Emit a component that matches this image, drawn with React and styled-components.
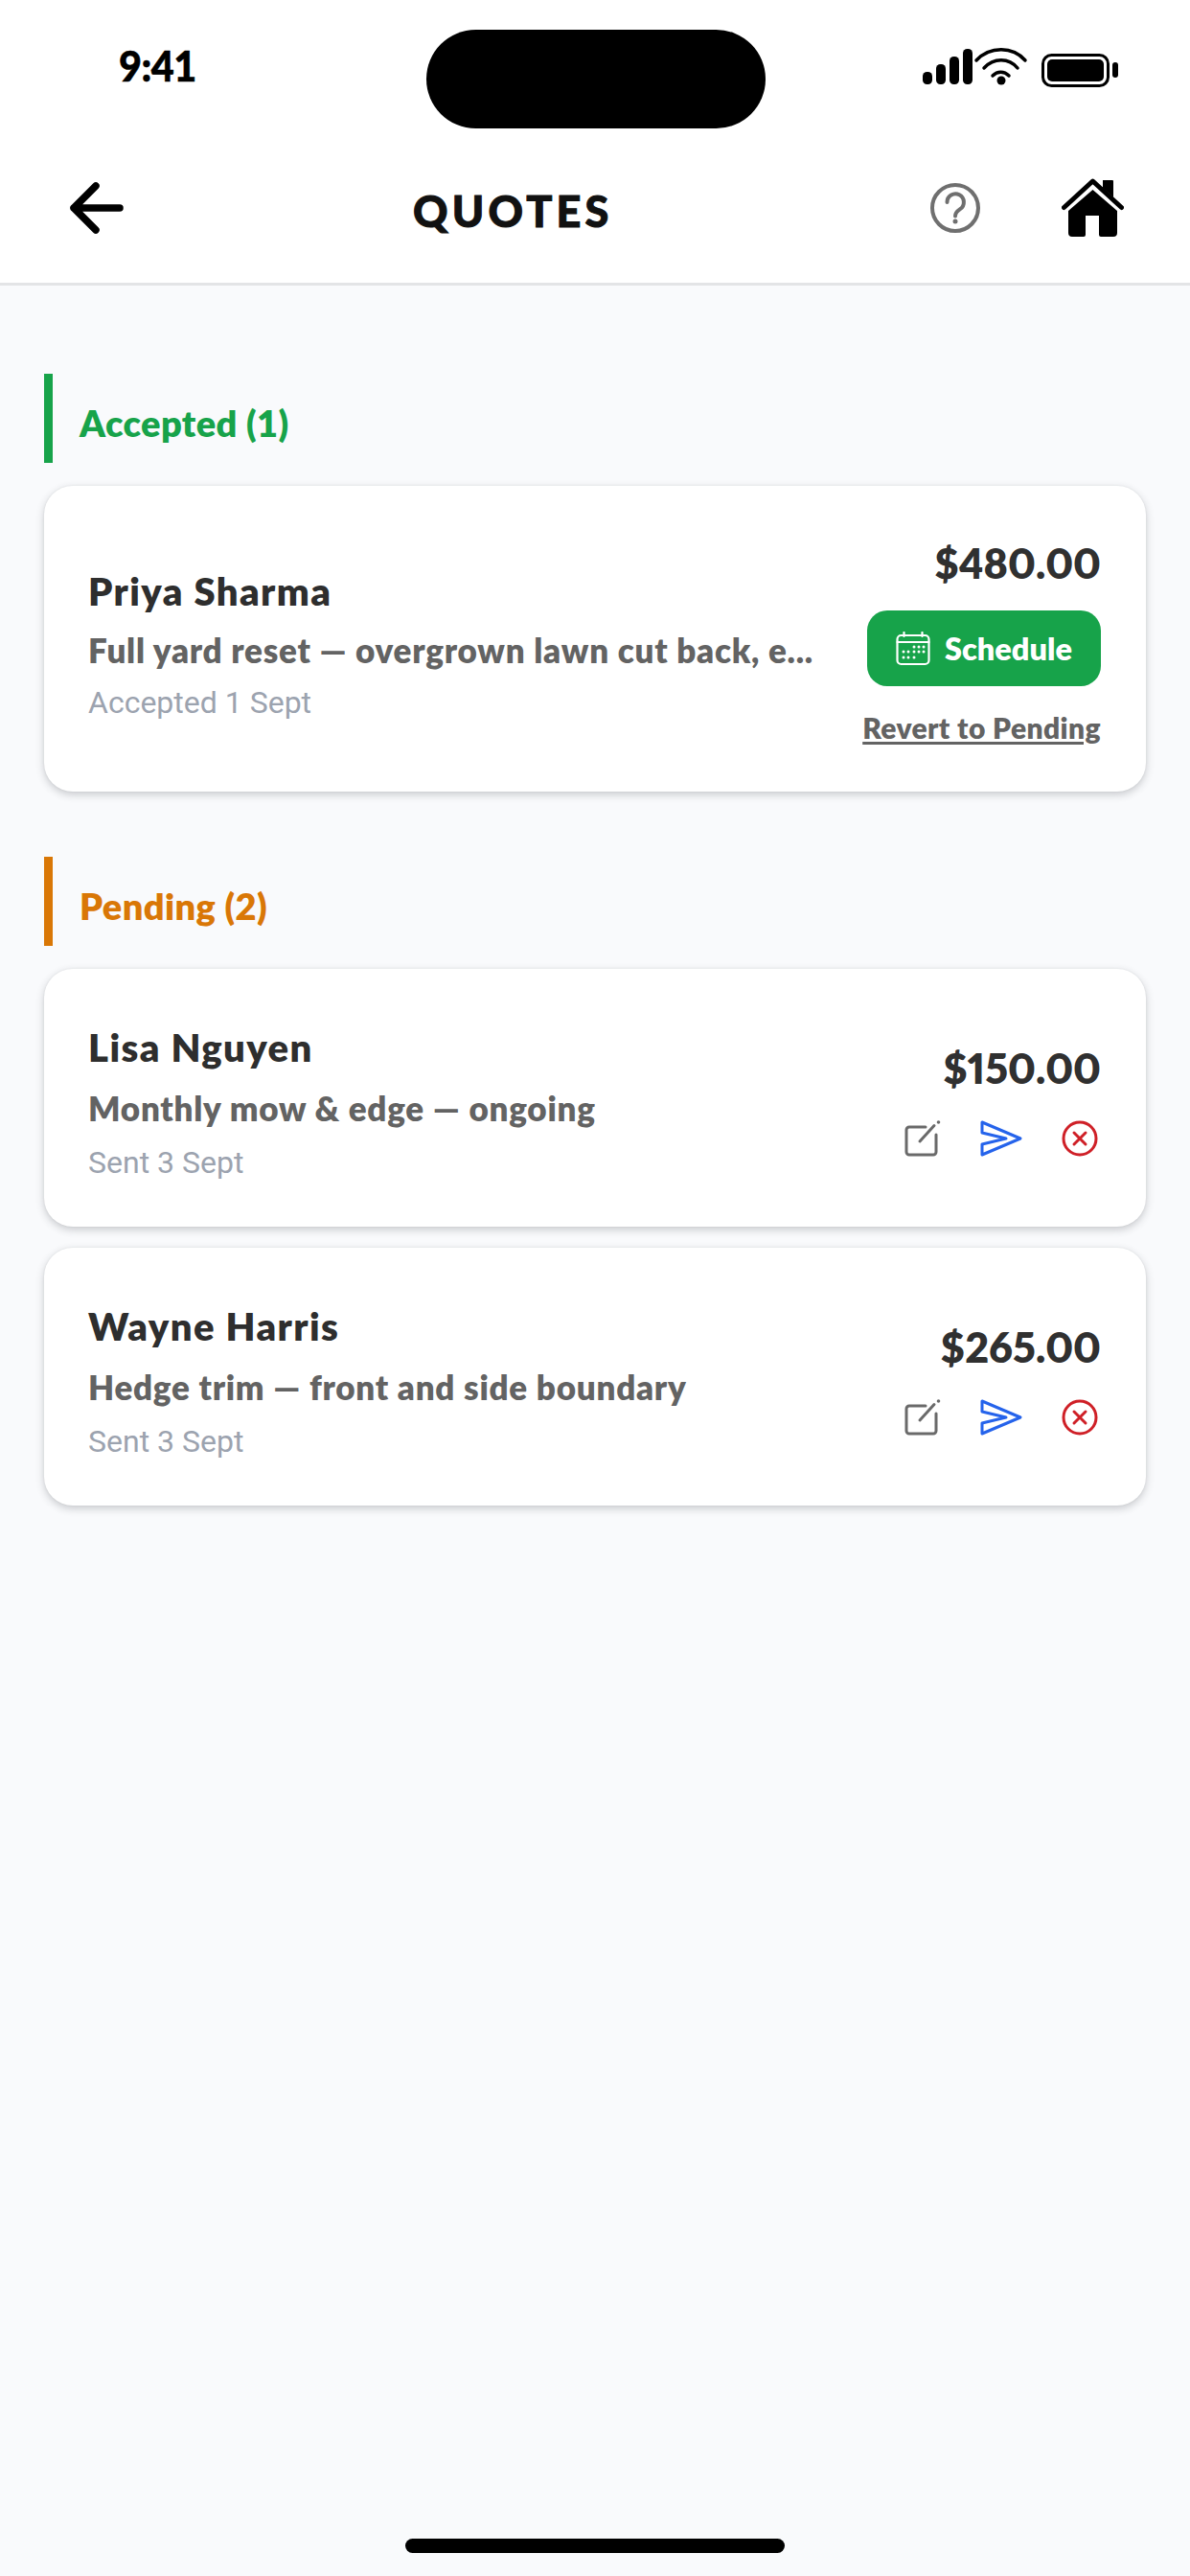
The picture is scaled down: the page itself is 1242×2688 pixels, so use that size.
import React from "react";
import styled, { createGlobalStyle } from "styled-components";

const Global = createGlobalStyle`
  html, body { margin: 0; padding: 0; background: #f9fafc; }
  body { width: 1242px; height: 2688px; overflow: hidden; font-family: "Lato", "Liberation Sans", sans-serif; }
  * { box-sizing: border-box; }
`;

const Screen = styled.div`
  position: relative; width: 1242px; height: 2688px; background: #f9fafc;
  display: flex; flex-direction: column;
`;
const Top = styled.header`
  height: 298px; background: #fff; border-bottom: 3px solid #e3e4e6; display: flex; flex-direction: column;
`;
const Status = styled.div`
  height: 148px; position: relative; display: flex; justify-content: space-between; padding: 42px 75px 0 124px;
`;
const Time = styled.span`
  font: 900 44px/52px "Lato", sans-serif; letter-spacing: -0.5px; color: #000; transform: scaleX(.94); transform-origin: left;
  -webkit-text-stroke: .6px #000;
`;
const Island = styled.div`
  position: absolute; left: 445px; top: 31px; width: 354px; height: 103px; border-radius: 52px; background: #000;
`;
const StatusIcons = styled.svg`width: 204px; height: 50px; margin-top: 6px;`;
const Nav = styled.nav`
  flex: 1; display: flex; align-items: center; padding: 0 0 10px 69px; position: relative;
`;
const Title = styled.h1`
  position: absolute; left: 431px; top: 46px; margin: 0; font: 900 45px/52px "Lato", sans-serif; letter-spacing: 4.2px; color: #111;
  -webkit-text-stroke: 1px #111;
`;
const NavRight = styled.div`margin-left: auto; display: flex; align-items: center; gap: 85px; padding-right: 69px;`;
const Content = styled.main`padding: 92px 46px 0; display: flex; flex-direction: column;`;
const Section = styled.section`display: flex; flex-direction: column; gap: 24px; margin-bottom: 68px;`;
const SectionHead = styled.h2`
  margin: 0; height: 93px; border-left: 9px solid ${p => p.$c}; padding: 8px 0 0 28px; display: flex; align-items: center;
  font: 800 38px/44px "Lato", sans-serif; letter-spacing: .4px; color: ${p => p.$c};
`;
const Cards = styled.div`display: flex; flex-direction: column; gap: 22px;`;
const Card = styled.article`
  height: ${p => p.$h}px; background: #fff; border-radius: 30px; padding: 0 47px 0 46px;
  box-shadow: 0 3px 9px rgba(40,45,55,.24), 0 0 2px rgba(40,45,55,.08);
  display: flex; align-items: stretch; justify-content: space-between;
`;
const Info = styled.div`
  display: flex; flex-direction: column; min-width: 0; padding-top: ${p => p.$top}px;
`;
const Name = styled.div`font: 800 40px/48px "Lato", sans-serif; letter-spacing: 1.4px; color: #2e2e2e;`;
const Desc = styled.div`
  font: 800 35px/40px "Lato", sans-serif; letter-spacing: .75px; color: #636363; margin-top: ${p => p.$m}px; white-space: nowrap;
`;
const When = styled.div`font: 400 32px/38px "Roboto", sans-serif; color: #9ca3af; margin-top: ${p => p.$m}px;`;
const Side = styled.div`
  display: flex; flex-direction: column; align-items: flex-end; flex: none; padding-top: ${p => p.$top}px;
`;
const Price = styled.div`
  font: 800 43px/52px "Lato", sans-serif; color: #303030; font-variant-numeric: proportional-nums;
`;
const ScheduleBtn = styled.button`
  margin-top: 23px; width: 244px; height: 79px; border: 0; border-radius: 21px; background: #17a34a; color: #fff;
  font: 800 32.5px/40px "Lato", sans-serif; display: flex; align-items: center; justify-content: center; gap: 15px; padding: 0;
`;
const Revert = styled.a`
  margin-top: 25px; font: 800 30px/36px "Lato", sans-serif; letter-spacing: .4px; color: #636363;
  text-decoration: underline; text-underline-offset: 3px;
`;
const Actions = styled.div`display: flex; align-items: center; gap: 41px; margin-top: 28px; margin-right: 3px;`;
const Indicator = styled.div`
  position: absolute; left: 423px; top: 2649px; width: 396px; height: 15px; border-radius: 8px; background: #000;
`;

const BackIcon = () => (
  <svg width="60" height="54" viewBox="0 0 60 54" fill="none" stroke="#000" strokeWidth="7.5" strokeLinecap="round" strokeLinejoin="round">
    <path d="M8 27H56M31 4L8 27L31 50" />
  </svg>
);
const HelpIcon = () => (
  <svg width="52" height="52" viewBox="0 0 52 52" fill="none" stroke="#6f6f6f" strokeWidth="4" strokeLinecap="round" strokeLinejoin="round">
    <circle cx="26" cy="26" r="24" />
    <path d="M17.5 20a8.7 8.7 0 1 1 13.6 7.2c-3.2 2.200-5.100 3.700-5.100 7.300" />
    <circle cx="26" cy="40" r="2.500" fill="#6f6f6f" stroke="none" />
  </svg>
);
const HomeIcon = () => (
  <svg width="65" height="61" viewBox="0 0 65 61" fill="#000">
    <path d="M43 2h10a1 1 0 0 1 1 1v17L43 10z" />
    <path d="M2.500 30.500L32.500 3L62.500 30.500" fill="none" stroke="#000" strokeWidth="5" strokeLinecap="round" strokeLinejoin="round" />
    <path d="M32.500 12L58 34v23a4 4 0 0 1-4 4H41a2 2 0 0 1-2-2V39H25v20a2 2 0 0 1-2 2H11a4 4 0 0 1-4-4V34z" />
  </svg>
);
const CalendarIcon = () => (
  <svg width="36" height="36" viewBox="0 0 36 36" fill="none" stroke="#fff" strokeWidth="2.200" strokeLinecap="round">
    <rect x="1.500" y="4" width="33" height="30" rx="4" />
    <path d="M1.500 11H34.500M8.500 1V5M27.500 1V5" />
    <g fill="#fff" stroke="none">
      {[[19,16],[24,16],[29,16],[8,21],[13,21],[19,21],[24,21],[29,21],[8,27],[13,27],[19,27]].map(([x, y]) => (
        <circle key={x + "-" + y} cx={x} cy={y} r="1.500" />
      ))}
    </g>
  </svg>
);
const EditIcon = () => (
  <svg width="38" height="38" viewBox="0 0 38 38" fill="none" stroke="#6a6a6a" strokeWidth="3" strokeLinecap="round" strokeLinejoin="round">
    <path d="M22 7H5a3 3 0 0 0-3 3v23a3 3 0 0 0 3 3h25a3 3 0 0 0 3-3V15" />
    <path d="M16 22L31 5.500" />
    <circle cx="35.500" cy="2" r="1.800" fill="#6a6a6a" stroke="none" />
  </svg>
);
const SendIcon = () => (
  <svg width="44" height="38" viewBox="0 0 44 38" fill="none" stroke="#2563eb" strokeWidth="3" strokeLinecap="round" strokeLinejoin="round">
    <path d="M2 2L42 19L2 36V25L27 19L2 13Z" />
  </svg>
);
const CancelIcon = () => (
  <svg width="38" height="38" viewBox="0 0 38 38" fill="none" stroke="#cf2027" strokeWidth="3" strokeLinecap="round">
    <circle cx="19" cy="19" r="17" />
    <path d="M13 13L25 25M25 13L13 25" />
  </svg>
);

const pending = [
  { name: "Lisa Nguyen", desc: "Monthly mow & edge — ongoing", when: "Sent 3 Sept", price: "$150.00" },
  { name: "Wayne Harris", desc: "Hedge trim — front and side boundary", when: "Sent 3 Sept", price: "$265.00" },
];

export default function App() {
  return (
    <Screen>
      <Global />
      <Top>
        <Status>
          <Time>9:41</Time>
          <Island />
          <StatusIcons viewBox="0 0 204 50">
            <rect x="0" y="27" width="10" height="13" rx="4.500" />
            <rect x="14" y="19" width="10" height="21" rx="4.500" />
            <rect x="28" y="11" width="10" height="29" rx="4.500" />
            <rect x="42" y="3" width="10" height="37" rx="4.500" />
            <g fill="none" stroke="#000" strokeWidth="3.500" strokeLinecap="round">
              <path d="M56 15C70 0 94 0 107 15" />
              <path d="M64 23C74 12 90 12 99 23" />
              <path d="M73 31C78 26 85 26 90 31" />
            </g>
            <circle cx="82" cy="36" r="4.500" />
            <rect x="125.500" y="9.500" width="68" height="32" rx="9" fill="none" stroke="#000" strokeWidth="3" />
            <rect x="130" y="14" width="59" height="23" rx="5" />
            <rect x="198" y="17" width="6" height="16" rx="3" />
          </StatusIcons>
        </Status>
        <Nav>
          <BackIcon />
          <Title>QUOTES</Title>
          <NavRight>
            <HelpIcon />
            <HomeIcon />
          </NavRight>
        </Nav>
      </Top>
      <Content>
        <Section>
          <SectionHead $c="#17a34a">Accepted (1)</SectionHead>
          <Card $h={319}>
            <Info $top={86}>
              <Name>Priya Sharma</Name>
              <Desc $m={17}>Full yard reset — overgrown lawn cut back, e...</Desc>
              <When $m={16}>Accepted 1 Sept</When>
            </Info>
            <Side $top={55}>
              <Price>$480.00</Price>
              <ScheduleBtn><CalendarIcon />Schedule</ScheduleBtn>
              <Revert>Revert to Pending</Revert>
            </Side>
          </Card>
        </Section>
        <Section>
          <SectionHead $c="#d97706">Pending (2)</SectionHead>
          <Cards>
            {pending.map(q => (
              <Card key={q.name} $h={269}>
                <Info $top={58}>
                  <Name>{q.name}</Name>
                  <Desc $m={19}>{q.desc}</Desc>
                  <When $m={18}>{q.when}</When>
                </Info>
                <Side $top={78}>
                  <Price>{q.price}</Price>
                  <Actions><EditIcon /><SendIcon /><CancelIcon /></Actions>
                </Side>
              </Card>
            ))}
          </Cards>
        </Section>
      </Content>
      <Indicator />
    </Screen>
  );
}
